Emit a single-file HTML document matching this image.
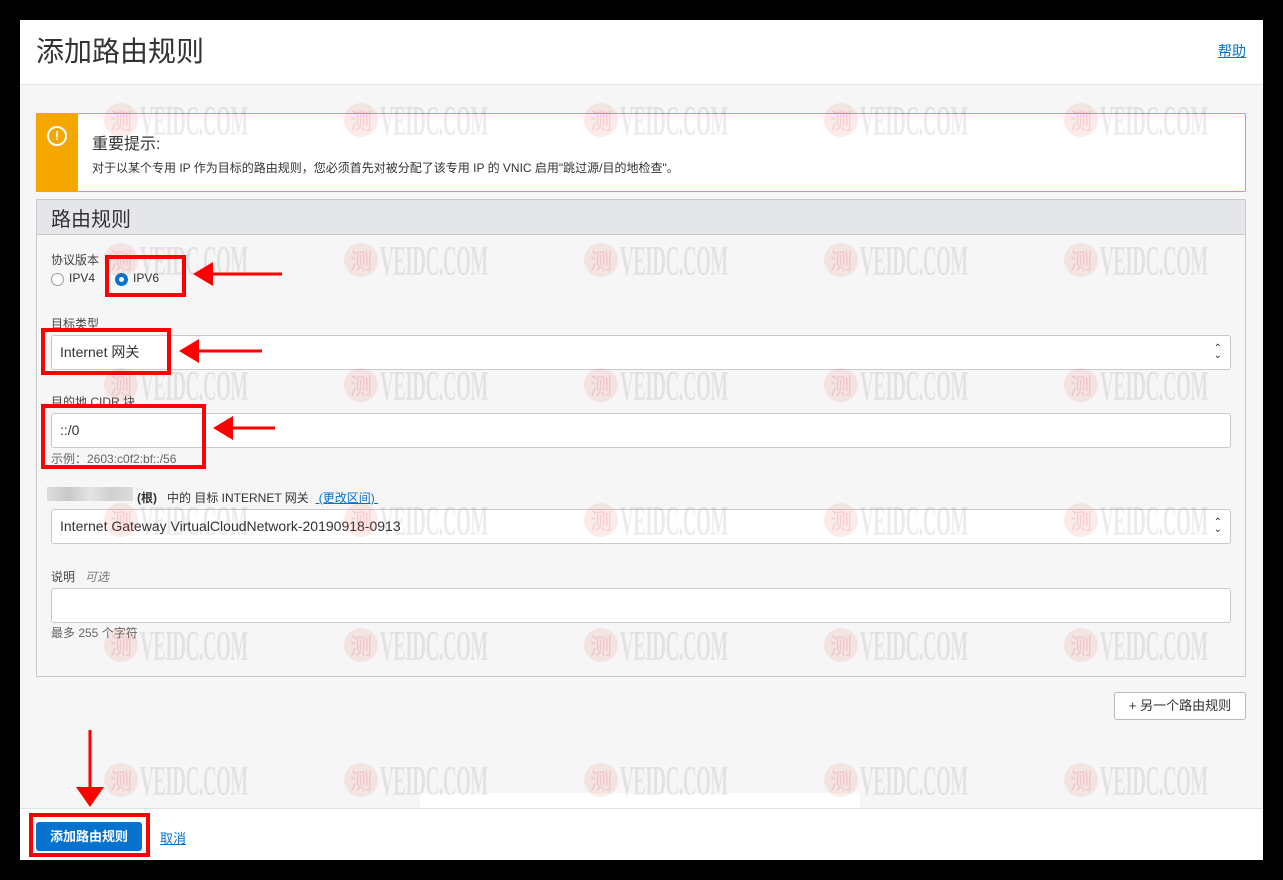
<!DOCTYPE html>
<html><head><meta charset="utf-8"><style>
*{box-sizing:border-box;margin:0;padding:0}
body{width:1283px;height:880px;background:#000;position:relative;overflow:hidden;font-family:"Liberation Sans","Noto Sans CJK SC",sans-serif;color:#333}
.a{position:absolute}
#page{left:20px;top:20px;width:1243px;height:840px;background:#f6f6f6;overflow:hidden}
.wm{position:absolute;height:36px;white-space:nowrap;pointer-events:none}
.wm i{position:absolute;left:0;top:1px;width:34px;height:34px;border-radius:50%;background:rgba(230,60,60,0.10);color:rgba(220,60,60,0.18);font-style:normal;font-size:22px;text-align:center;line-height:34px;font-family:"Noto Sans CJK SC",sans-serif}
.wm b{position:absolute;left:36px;top:-4px;font-family:"Liberation Serif",serif;font-weight:bold;font-size:42px;color:rgba(0,0,0,0.08);transform:scaleX(0.45);transform-origin:left;letter-spacing:-1px}
.inp{position:absolute;left:31px;width:1180px;height:35px;background:#fff;border:1px solid #c9c9c9;border-radius:3px;font-size:14px;line-height:33px;padding-left:8px;color:#333}
.lbl{position:absolute;left:31px;font-size:12px;color:#444}
.red{position:absolute;border:4px solid #f00}
.caret{position:absolute;right:8px;top:9px;font-size:10px;line-height:7px;color:#333}
</style></head><body>
<div id="page" class="a">
 <div class="a" style="left:0;top:0;width:1243px;height:65px;background:#fff;border-bottom:1px solid #e3e3e3"></div>
 <div class="a" style="left:16px;top:10px;font-size:28px;color:#333">添加路由规则</div>
 <div class="a" style="left:1198px;top:21px;font-size:14px;color:#0572ce;text-decoration:underline">帮助</div>

 <div class="a" style="left:16px;top:93px;width:1210px;height:79px;background:#fff;border:1px solid #f0a30a;border-radius:2px"></div>
 <div class="a" style="left:16px;top:93px;width:42px;height:79px;background:#f5a700"></div>
 <div class="a" style="left:27px;top:106px;width:20px;height:20px;border:2px solid #fff;border-radius:50%;color:#fff;font-size:13px;font-weight:bold;text-align:center;line-height:16px">!</div>
 <div class="a" style="left:72px;top:110px;font-size:16px;color:#333">重要提示:</div>
 <div class="a" style="left:72px;top:139px;font-size:12px;color:#333">对于以某个专用 IP 作为目标的路由规则，您必须首先对被分配了该专用 IP 的 VNIC 启用"跳过源/目的地检查"。</div>

 <div class="a" style="left:16px;top:179px;width:1210px;height:478px;border:1px solid #c9c9c9;background:#f6f6f6">
  <div class="a" style="left:0;top:0;width:1208px;height:35px;background:#e4e6e9;border-bottom:1px solid #c9c9c9"></div>
  <div class="a" style="left:14px;top:3px;font-size:20px;color:#333">路由规则</div>
  <div class="lbl" style="left:14px;top:51px">协议版本</div>
  <div class="a" style="left:14px;top:73px;width:13px;height:13px;border:1px solid #999;border-radius:50%;background:#fff"></div>
  <div class="a" style="left:32px;top:71px;font-size:12px">IPV4</div>
  <div class="a" style="left:78px;top:73px;width:13px;height:13px;border-radius:50%;background:#0572ce"><div class="a" style="left:4px;top:4px;width:5px;height:5px;border-radius:50%;background:#fff"></div></div>
  <div class="a" style="left:96px;top:71px;font-size:12px">IPV6</div>

  <div class="lbl" style="left:14px;top:115px">目标类型</div>
  <div class="inp" style="left:14px;top:135px">Internet 网关<span class="caret">⌃<br>⌄</span></div>
  <div class="lbl" style="left:14px;top:193px">目的地 CIDR 块</div>
  <div class="inp" style="left:14px;top:213px">::/0</div>
  <div class="lbl" style="left:14px;top:250px;color:#666">示例：2603:c0f2:bf::/56</div>

  <div class="a" style="left:10px;top:287px;width:86px;height:14px;background:linear-gradient(90deg,#ddd,#c8c8c8,#e4e4e4,#cfcfcf,#ddd)"></div>
  <div class="a" style="left:100px;top:289px;font-size:12px;color:#333"><b>(根)</b>&nbsp;&nbsp; 中的 目标 INTERNET 网关 &nbsp;<span style="color:#0572ce;text-decoration:underline">&nbsp;(更改区间)&nbsp;</span></div>
  <div class="inp" style="left:14px;top:309px">Internet Gateway VirtualCloudNetwork-20190918-0913<span class="caret">⌃<br>⌄</span></div>
  <div class="lbl" style="left:14px;top:368px">说明 &nbsp;&nbsp;<i style="color:#777">可选</i></div>
  <div class="inp" style="left:14px;top:388px"></div>
  <div class="lbl" style="left:14px;top:424px;color:#666">最多 255 个字符</div>
 </div>

 <div class="a" style="left:1094px;top:672px;width:132px;height:28px;background:#fff;border:1px solid #bbb;border-radius:3px;font-size:13px;line-height:26px;text-align:center;color:#333">+ 另一个路由规则</div>

 <div class="a" style="left:400px;top:773px;width:440px;height:16px;background:#fff"></div>
 <div id="wms"></div>
 <div class="a" style="left:0;top:788px;width:1243px;height:52px;background:#fff;border-top:1px solid #e0e0e0"></div>
 <div class="a" style="left:16px;top:802px;width:106px;height:29px;background:#0572ce;border-radius:3px;color:#fff;font-size:13px;font-weight:bold;text-align:center;line-height:29px">添加路由规则</div>
 <div class="a" style="left:140px;top:808px;font-size:13px;color:#0572ce;text-decoration:underline">取消</div>
</div>

<div class="red" style="left:105px;top:255px;width:81px;height:42px"></div>
<div class="red" style="left:41px;top:328px;width:130px;height:47px"></div>
<div class="red" style="left:41px;top:404px;width:165px;height:65px"></div>
<div class="red" style="left:29px;top:813px;width:121px;height:44px"></div>
<svg class="a" style="left:0;top:0" width="1283" height="880">
 <g fill="#f00" stroke="#f00">
  <line x1="210" y1="274" x2="282" y2="274" stroke-width="3"/><polygon points="193,274 213,262 213,286" stroke="none"/>
  <line x1="196" y1="351" x2="262" y2="351" stroke-width="3"/><polygon points="179,351 199,339 199,363" stroke="none"/>
  <line x1="230" y1="428" x2="275" y2="428" stroke-width="3"/><polygon points="213,428 233,416 233,440" stroke="none"/>
  <line x1="90" y1="730" x2="90" y2="790" stroke-width="3"/><polygon points="90,807 76,787 104,787" stroke="none"/>
 </g>
</svg>
<script>
var h='',xs=[84,324,564,804,1044],ys=[82,222,347,482,607,742];
ys.forEach(function(y){xs.forEach(function(x){h+='<div class="wm" style="left:'+x+'px;top:'+y+'px"><i>测</i><b>VEIDC.COM</b></div>';});});
document.getElementById('wms').innerHTML=h;
</script>
</body></html>
